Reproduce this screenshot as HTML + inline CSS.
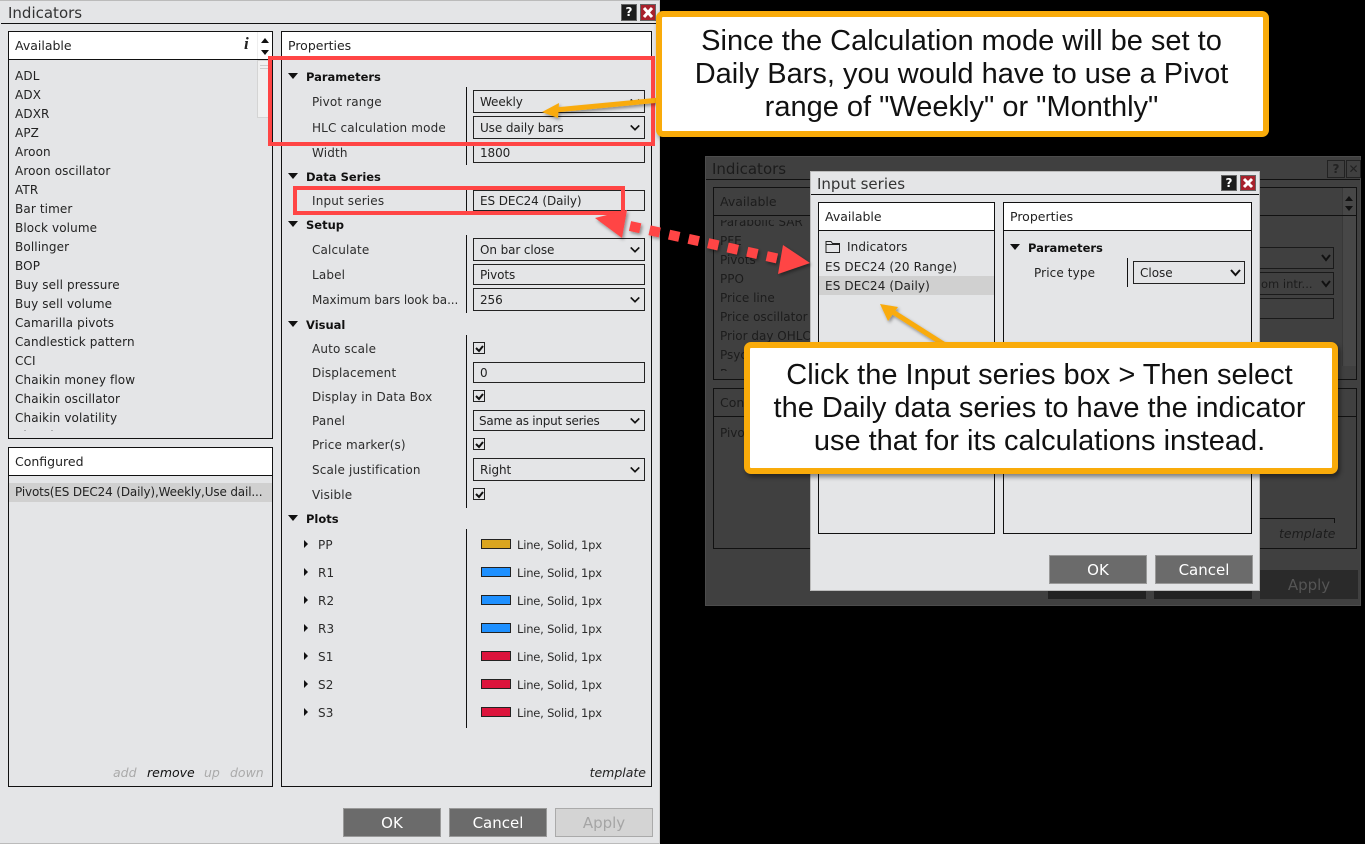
<!DOCTYPE html>
<html><head><meta charset="utf-8"><style>
html,body{margin:0;padding:0;background:#000;width:1365px;height:844px;overflow:hidden}
body{position:relative;font-family:"DejaVu Sans","Liberation Sans",sans-serif;font-size:12px;color:#222}
div,span{box-sizing:border-box}
.a{position:absolute}
.t{position:absolute;white-space:nowrap;line-height:16px;height:16px}
.b{font-weight:bold;color:#111;font-size:11.5px;letter-spacing:0!important}
.win{position:absolute;background:#e4e5e7}
.box{position:absolute;border:1px solid #111}
.box>.t{margin-top:1px;letter-spacing:.12px}
.box>.h{margin-top:0;letter-spacing:0}
.hd{position:absolute;left:0;right:0;top:0;background:#fff;border-bottom:1px solid #111}
.f{position:absolute;left:473px;width:172px;border:1px solid #222}
.f span{position:absolute;left:6px;top:50%;margin-top:-8px;line-height:16px;white-space:nowrap;letter-spacing:-.1px}
.f svg{position:absolute;right:3px;top:50%;margin-top:-4px;transform:scale(.85)}
.v{position:absolute;left:466px;width:1px;background:#111}
.cb{position:absolute;left:473px;width:12px;height:12px;border:1px solid #222}
.cb svg{position:absolute;left:1px;top:1px}
.dn{position:absolute;left:288px;width:0;height:0;border-left:5.5px solid transparent;border-right:5.5px solid transparent;border-top:6px solid #111}
.rt{position:absolute;left:304px;width:0;height:0;border-top:4px solid transparent;border-bottom:4px solid transparent;border-left:4px solid #111}
.sw{position:absolute;left:481px;width:30px;height:10px;border:1px solid #222}
#props>.t{margin-top:1px;letter-spacing:.15px;color:#2c2c2c}
#props>.b{color:#111}
#props>.p{font-size:11.5px;letter-spacing:-.2px}
.btn{position:absolute;height:29px;width:98px;background:#6b6b6b;border:1px solid #999;color:#fff;text-align:center;line-height:29px;font-size:15px}
.call{position:absolute;background:#fff;border:6px solid #f9ab0a;border-radius:7px;box-shadow:2px 3px 5px rgba(0,0,0,.45);font-family:"Liberation Sans",Arial,sans-serif;color:#111;font-size:29px;line-height:33px;text-align:center;white-space:nowrap}
.red{position:absolute;border:4px solid #ff4545}
.dk{color:#1c1c1c}
.dk.t{color:#1c1c1c}
</style></head><body>

<!-- Dark background window -->
<div class="a" style="left:705px;top:156px;width:656px;height:450px;background:#404040;border:1px solid #4c4c4c">
  <div class="t" style="left:6px;top:3px;font-size:15px;color:#1c1c1c;line-height:18px">Indicators</div>
  <div class="a" style="left:0;top:22px;width:654px;height:1px;background:#111"></div>
  <div class="a" style="left:621px;top:3px;width:18px;height:18px;border:1px solid #222;color:#222;font-weight:bold;text-align:center;line-height:16px">?</div>
  <div class="a" style="left:640px;top:3px;width:15px;height:18px;border:1px solid #222;color:#222;font-weight:bold;text-align:center;line-height:16px">✕</div>
  <div class="a" style="left:7px;top:30px;width:644px;height:193px;border:1px solid #111;overflow:hidden">
    <div class="a" style="left:0;top:27px;width:642px;height:1px;background:#111"></div>
    <div class="t dk" style="left:6px;top:6px;font-size:12.5px">Available</div>
    <div class="t dk" style="left:6px;top:26px">Parabolic SAR</div>
    <div class="a" style="left:0;top:27px;width:200px;height:5px;background:#404040"></div>
    <div class="a" style="left:0;top:27px;width:642px;height:1px;background:#111"></div>
    <div class="t dk" style="left:6px;top:45px">PFE</div>
    <div class="t dk" style="left:6px;top:64px">Pivots</div>
    <div class="t dk" style="left:6px;top:83px">PPO</div>
    <div class="t dk" style="left:6px;top:102px">Price line</div>
    <div class="t dk" style="left:6px;top:121px">Price oscillator</div>
    <div class="t dk" style="left:6px;top:140px">Prior day OHLC</div>
    <div class="t dk" style="left:6px;top:159px">Psychological line</div>
    <div class="t dk" style="left:6px;top:178px">R-squared</div>
    <div class="a" style="left:0;top:183px;width:628px;height:10px;background:#404040"></div>
    <div class="a" style="left:628px;top:0;width:14px;height:178px;background:#474747;border-left:1px solid #383838"></div>
    <div class="a" style="left:628px;top:27px;width:14px;height:1px;background:#111"></div>
    <div class="a" style="left:631px;top:8px;width:0;height:0;border-left:4px solid transparent;border-right:4px solid transparent;border-bottom:5px solid #111"></div>
    <div class="a" style="left:631px;top:18px;width:0;height:0;border-left:4px solid transparent;border-right:4px solid transparent;border-top:5px solid #111"></div>
  </div>
  <div class="a" style="left:7px;top:231px;width:644px;height:161px;border:1px solid #111">
    <div class="t dk" style="left:6px;top:6px;font-size:12.5px">Configured</div>
    <div class="a" style="left:0;top:27px;width:642px;height:1px;background:#111"></div>
    <div class="t dk" style="left:6px;top:36px">Pivots(ES DEC24 (Daily),Weekly,Use dail...</div>
  </div>
  <div class="a" style="left:553px;top:361px;width:76px;height:1px;background:#111"></div>
  <div class="a" style="left:628px;top:361px;width:1px;height:5px;background:#111"></div>
  <div class="t dk" style="left:573px;top:369px;font-style:italic;font-size:12.5px">template</div>
  <div class="a" style="left:342px;top:413px;width:98px;height:29px;background:#222"></div>
  <div class="a" style="left:448px;top:413px;width:98px;height:29px;background:#222"></div>
  <div class="a" style="left:554px;top:413px;width:98px;height:29px;background:#2a2a2a;color:#555;text-align:center;line-height:31px;font-size:15px">Apply</div>
  <div class="a" style="left:540px;top:90px;width:88px;height:22px;border:1px solid #1a1a1a"><svg class="a" style="right:2px;top:6px" width="10" height="8"><polyline points="1,1 5,6 9,1" fill="none" stroke="#111" stroke-width="2"/></svg></div>
  <div class="a" style="left:540px;top:115px;width:88px;height:23px;border:1px solid #1a1a1a"><span class="t dk" style="left:14px;top:3px;font-size:11.5px">om intr...</span><svg class="a" style="right:2px;top:7px" width="10" height="8"><polyline points="1,1 5,6 9,1" fill="none" stroke="#111" stroke-width="2"/></svg></div>
  <div class="a" style="left:540px;top:141px;width:88px;height:21px;border:1px solid #1a1a1a"></div>
</div>

<!-- Main window -->
<div class="win" style="left:0;top:0;width:660px;height:844px;border-top:1px solid #bbb;border-right:1px solid #ccc;border-bottom:1px solid #bbb">
  <div class="t" style="left:8px;top:3px;font-size:15px;line-height:18px;color:#333">Indicators</div>
  <div class="a" style="left:1px;top:22px;width:657px;height:1px;background:#111"></div>
  <div class="a" style="left:621px;top:3px;width:16px;height:17px;background:#1c1c1c;border:1px solid #666;color:#fff;font-weight:bold;font-size:12px;text-align:center;line-height:15px">?</div>
  <div class="a" style="left:640px;top:3px;width:16px;height:17px;background:#a8222c;border:1px solid #666"><svg width="14" height="15" style="display:block"><path d="M3 3 L11 12 M11 3 L3 12" stroke="#fff" stroke-width="3"/></svg></div>
</div>

<!-- Available -->
<div class="box" style="left:8px;top:31px;width:265px;height:408px;background:#e4e5e7;overflow:hidden">
  <div class="hd" style="height:28px"></div>
  <div class="t h" style="left:6px;top:6px;font-size:12.5px">Available</div>
  <div class="t h" style="left:235px;top:3px;font-family:'Liberation Serif',serif;font-style:italic;font-weight:bold;font-size:17px;line-height:18px">i</div>
  <div class="a" style="left:248px;top:0;width:1px;height:27px;background:#eee"></div>
  <div class="a" style="left:252px;top:6px;width:0;height:0;border-left:4px solid transparent;border-right:4px solid transparent;border-bottom:5px solid #111"></div>
  <div class="a" style="left:252px;top:18px;width:0;height:0;border-left:4px solid transparent;border-right:4px solid transparent;border-top:5px solid #111"></div>
  <div class="a" style="left:248px;top:28px;width:15px;height:58px;background:#f0f0f0;border:1px solid #d4d4d4"></div>
  <div class="a" style="left:251px;top:33px;width:9px;height:1px;background:#ccc"></div>
  <div class="a" style="left:251px;top:36px;width:9px;height:1px;background:#ccc"></div>
  <div class="t" style="left:6px;top:35px">ADL</div>
  <div class="t" style="left:6px;top:54px">ADX</div>
  <div class="t" style="left:6px;top:73px">ADXR</div>
  <div class="t" style="left:6px;top:92px">APZ</div>
  <div class="t" style="left:6px;top:111px">Aroon</div>
  <div class="t" style="left:6px;top:130px">Aroon oscillator</div>
  <div class="t" style="left:6px;top:149px">ATR</div>
  <div class="t" style="left:6px;top:168px">Bar timer</div>
  <div class="t" style="left:6px;top:187px">Block volume</div>
  <div class="t" style="left:6px;top:206px">Bollinger</div>
  <div class="t" style="left:6px;top:225px">BOP</div>
  <div class="t" style="left:6px;top:244px">Buy sell pressure</div>
  <div class="t" style="left:6px;top:263px">Buy sell volume</div>
  <div class="t" style="left:6px;top:282px">Camarilla pivots</div>
  <div class="t" style="left:6px;top:301px">Candlestick pattern</div>
  <div class="t" style="left:6px;top:320px">CCI</div>
  <div class="t" style="left:6px;top:339px">Chaikin money flow</div>
  <div class="t" style="left:6px;top:358px">Chaikin oscillator</div>
  <div class="t" style="left:6px;top:377px">Chaikin volatility</div>
  <div class="a" style="left:0;top:396px;width:263px;height:11px;overflow:hidden"><div class="t" style="left:6px;top:0">Chande momentum</div></div>
  <div class="a" style="left:0;top:399px;width:263px;height:8px;background:#e4e5e7"></div>
</div>

<!-- Configured -->
<div class="box" style="left:8px;top:447px;width:265px;height:340px;background:#e4e5e7">
  <div class="hd" style="height:28px"></div>
  <div class="t h" style="left:6px;top:6px;font-size:12.5px">Configured</div>
  <div class="a" style="left:0;top:35px;width:263px;height:19px;background:#d0d0d0"></div>
  <div class="t h" style="left:6px;top:36px;letter-spacing:-.15px">Pivots(ES DEC24 (Daily),Weekly,Use dail...</div>
  <div class="t h" style="left:104px;top:317px;font-style:italic;color:#aaa;font-size:12.5px">add</div>
  <div class="t h" style="left:138px;top:317px;font-style:italic;color:#111;font-size:12.5px">remove</div>
  <div class="t h" style="left:195px;top:317px;font-style:italic;color:#aaa;font-size:12.5px">up</div>
  <div class="t h" style="left:221px;top:317px;font-style:italic;color:#aaa;font-size:12.5px">down</div>
</div>

<!-- Properties -->
<div class="box" style="left:281px;top:31px;width:371px;height:756px;background:#e4e5e7">
  <div class="hd" style="height:28px"></div>
  <div class="t h" style="left:6px;top:6px;font-size:12.5px">Properties</div>
  <div class="t h" style="right:5px;top:733px;font-style:italic;font-size:12.5px">template</div>
</div>

<div id="props">
  <div class="dn" style="top:73px"></div><div class="t b" style="left:306px;top:68px">Parameters</div>
  <div class="v" style="top:87px;height:78px"></div>
  <div class="t" style="left:312px;top:93px">Pivot range</div>
  <div class="f" style="top:90px;height:23px"><span>Weekly</span><svg width="12" height="8"><polyline points="1,1 6,6 11,1" fill="none" stroke="#111" stroke-width="2"/></svg></div>
  <div class="t" style="left:312px;top:119px">HLC calculation mode</div>
  <div class="f" style="top:116px;height:23px"><span>Use daily bars</span><svg width="12" height="8"><polyline points="1,1 6,6 11,1" fill="none" stroke="#111" stroke-width="2"/></svg></div>
  <div class="t" style="left:312px;top:144px">Width</div>
  <div class="f" style="top:143px;height:20px"><span>1800</span></div>

  <div class="dn" style="top:173px"></div><div class="t b" style="left:306px;top:168px">Data Series</div>
  <div class="v" style="top:187px;height:26px"></div>
  <div class="t" style="left:312px;top:192px">Input series</div>
  <div class="f" style="top:190px;height:21px"><span>ES DEC24 (Daily)</span></div>

  <div class="dn" style="top:221px"></div><div class="t b" style="left:306px;top:216px">Setup</div>
  <div class="v" style="top:235px;height:78px"></div>
  <div class="t" style="left:312px;top:241px">Calculate</div>
  <div class="f" style="top:238px;height:23px"><span>On bar close</span><svg width="12" height="8"><polyline points="1,1 6,6 11,1" fill="none" stroke="#111" stroke-width="2"/></svg></div>
  <div class="t" style="left:312px;top:266px">Label</div>
  <div class="f" style="top:264px;height:21px"><span>Pivots</span></div>
  <div class="t" style="left:312px;top:291px;letter-spacing:-.08px">Maximum bars look ba...</div>
  <div class="f" style="top:288px;height:23px"><span>256</span><svg width="12" height="8"><polyline points="1,1 6,6 11,1" fill="none" stroke="#111" stroke-width="2"/></svg></div>

  <div class="dn" style="top:321px"></div><div class="t b" style="left:306px;top:316px">Visual</div>
  <div class="v" style="top:335px;height:173px"></div>
  <div class="t" style="left:312px;top:340px">Auto scale</div>
  <div class="cb" style="top:342px"><svg width="9" height="9"><polyline points="1,4 4,7 8,2" fill="none" stroke="#111" stroke-width="2"/></svg></div>
  <div class="t" style="left:312px;top:364px">Displacement</div>
  <div class="f" style="top:362px;height:21px"><span>0</span></div>
  <div class="t" style="left:312px;top:388px">Display in Data Box</div>
  <div class="cb" style="top:390px"><svg width="9" height="9"><polyline points="1,4 4,7 8,2" fill="none" stroke="#111" stroke-width="2"/></svg></div>
  <div class="t" style="left:312px;top:412px">Panel</div>
  <div class="f" style="top:410px;height:21px"><span style="left:5px;letter-spacing:-.25px">Same as input series</span><svg width="12" height="8"><polyline points="1,1 6,6 11,1" fill="none" stroke="#111" stroke-width="2"/></svg></div>
  <div class="t" style="left:312px;top:436px">Price marker(s)</div>
  <div class="cb" style="top:438px"><svg width="9" height="9"><polyline points="1,4 4,7 8,2" fill="none" stroke="#111" stroke-width="2"/></svg></div>
  <div class="t" style="left:312px;top:461px">Scale justification</div>
  <div class="f" style="top:458px;height:23px"><span>Right</span><svg width="12" height="8"><polyline points="1,1 6,6 11,1" fill="none" stroke="#111" stroke-width="2"/></svg></div>
  <div class="t" style="left:312px;top:486px">Visible</div>
  <div class="cb" style="top:488px"><svg width="9" height="9"><polyline points="1,4 4,7 8,2" fill="none" stroke="#111" stroke-width="2"/></svg></div>

  <div class="dn" style="top:515px"></div><div class="t b" style="left:306px;top:510px">Plots</div>
  <div class="v" style="top:529px;height:199px"></div>

  <div class="rt" style="top:540px"></div><div class="t" style="left:318px;top:536px">PP</div><div class="sw" style="top:539px;background:#daa520"></div><div class="t p" style="left:517px;top:536px">Line, Solid, 1px</div>
  <div class="rt" style="top:568px"></div><div class="t" style="left:318px;top:564px">R1</div><div class="sw" style="top:567px;background:#1e90ff"></div><div class="t p" style="left:517px;top:564px">Line, Solid, 1px</div>
  <div class="rt" style="top:596px"></div><div class="t" style="left:318px;top:592px">R2</div><div class="sw" style="top:595px;background:#1e90ff"></div><div class="t p" style="left:517px;top:592px">Line, Solid, 1px</div>
  <div class="rt" style="top:624px"></div><div class="t" style="left:318px;top:620px">R3</div><div class="sw" style="top:623px;background:#1e90ff"></div><div class="t p" style="left:517px;top:620px">Line, Solid, 1px</div>
  <div class="rt" style="top:652px"></div><div class="t" style="left:318px;top:648px">S1</div><div class="sw" style="top:651px;background:#dc143c"></div><div class="t p" style="left:517px;top:648px">Line, Solid, 1px</div>
  <div class="rt" style="top:680px"></div><div class="t" style="left:318px;top:676px">S2</div><div class="sw" style="top:679px;background:#dc143c"></div><div class="t p" style="left:517px;top:676px">Line, Solid, 1px</div>
  <div class="rt" style="top:708px"></div><div class="t" style="left:318px;top:704px">S3</div><div class="sw" style="top:707px;background:#dc143c"></div><div class="t p" style="left:517px;top:704px">Line, Solid, 1px</div>
</div>

<div class="btn" style="left:343px;top:808px">OK</div>
<div class="btn" style="left:449px;top:808px">Cancel</div>
<div class="btn" style="left:555px;top:808px;background:#d4d4d4;border-color:#aaa;color:#a5a5a5">Apply</div>

<!-- Input series dialog -->
<div class="win" style="left:810px;top:171px;width:450px;height:420px;border:1px solid #bbb">
  <div class="t" style="left:6px;top:3px;font-size:15px;line-height:18px;color:#333">Input series</div>
  <div class="a" style="left:0;top:22px;width:448px;height:1px;background:#111"></div>
  <div class="a" style="left:410px;top:3px;width:16px;height:16px;background:#1c1c1c;border:1px solid #666;color:#fff;font-weight:bold;text-align:center;line-height:14px">?</div>
  <div class="a" style="left:429px;top:3px;width:16px;height:16px;background:#a8222c;border:1px solid #666"><svg width="14" height="14" style="display:block"><path d="M3 3 L11 11 M11 3 L3 11" stroke="#fff" stroke-width="3"/></svg></div>
</div>
<div class="box" style="left:818px;top:202px;width:177px;height:332px;background:#e4e5e7">
  <div class="hd" style="height:28px"></div>
  <div class="t h" style="left:6px;top:6px;font-size:12.5px">Available</div>
  <svg class="a" style="left:6px;top:37px" width="16" height="14"><path d="M1 12.5 V1.5 H6 L7.5 3.5 H14.5 V12.5 Z M1 4.5 H14.5" fill="none" stroke="#222" stroke-width="1"/></svg>
  <div class="t" style="left:28px;top:35px">Indicators</div>
  <div class="t" style="left:6px;top:55px">ES DEC24 (20 Range)</div>
  <div class="a" style="left:0;top:73px;width:175px;height:19px;background:#d0d0d0"></div>
  <div class="t" style="left:6px;top:74px">ES DEC24 (Daily)</div>
</div>
<div class="box" style="left:1003px;top:202px;width:249px;height:332px;background:#e4e5e7">
  <div class="hd" style="height:28px"></div>
  <div class="t h" style="left:6px;top:6px;font-size:12.5px">Properties</div>
  <div class="a" style="left:6px;top:41px;width:0;height:0;border-left:5.5px solid transparent;border-right:5.5px solid transparent;border-top:6px solid #111"></div>
  <div class="t b" style="left:24px;top:36px">Parameters</div>
  <div class="a" style="left:123px;top:55px;width:1px;height:29px;background:#111"></div>
  <div class="t" style="left:30px;top:61px">Price type</div>
  <div class="a" style="left:129px;top:58px;width:112px;height:23px;border:1px solid #222"><span class="t" style="left:6px;top:3px">Close</span><svg class="a" style="right:3px;top:7px" width="11" height="8"><polyline points="1,1 5.5,6 10,1" fill="none" stroke="#111" stroke-width="2"/></svg></div>
</div>
<div class="btn" style="left:1049px;top:555px">OK</div>
<div class="btn" style="left:1155px;top:555px">Cancel</div>

<!-- Red rectangles -->
<div class="red" style="left:268px;top:56px;width:387px;height:90px"></div>
<div class="red" style="left:293px;top:186px;width:332px;height:29px"></div>

<!-- Arrows -->
<svg class="a" style="left:0;top:0;overflow:visible" width="1365" height="844">
  <defs><filter id="s" x="-20%" y="-20%" width="140%" height="140%"><feDropShadow dx="1.5" dy="2" stdDeviation="1.5" flood-color="#000" flood-opacity=".4"/></filter></defs>
  <g filter="url(#s)">
    <line x1="660" y1="100" x2="555" y2="110" stroke="#f9ab0a" stroke-width="5"/>
    <polygon points="542,112 559,103 558,118" fill="#f9ab0a"/>
    <line x1="945" y1="345" x2="893" y2="312" stroke="#f9ab0a" stroke-width="5"/>
    <polygon points="880,304 898,307 888,321" fill="#f9ab0a"/>
  </g>
  <g filter="url(#s)">
    <line x1="630" y1="226" x2="780" y2="259" stroke="#ff4545" stroke-width="10" stroke-dasharray="10.5 9.5"/>
    <polygon points="595,218 627,210 622,238" fill="#ff4545"/>
    <polygon points="810,263 783,245 778,274" fill="#ff4545"/>
  </g>
</svg>

<!-- Callouts -->
<div class="call" style="left:656px;top:11px;width:613px;height:126px;padding-top:8px;padding-right:2px">Since the Calculation mode will be set to<br>Daily Bars, you would have to use a Pivot<br>range of "Weekly" or "Monthly"</div>
<div class="call" style="left:744px;top:342px;width:594px;height:132px;padding-top:11px;padding-right:3px">Click the Input series box &gt; Then select<br>the Daily data series to have the indicator<br>use that for its calculations instead.</div>

</body></html>
